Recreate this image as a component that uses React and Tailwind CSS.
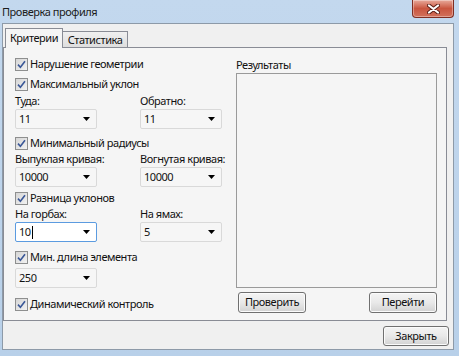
import React from "react";

function Check() {
  return (
    <span className="w-[13px] h-[13px] border border-[#8e8f8f] bg-gradient-to-br from-[#d6d6d6] to-[#f2f2f2] flex items-center justify-center shrink-0">
      <svg width="9" height="9" viewBox="0 0 9 9">
        <path d="M1 4.6 L3.4 7.2 L8 1.2" stroke="#3a5797" strokeWidth="1.6" fill="none" />
      </svg>
    </span>
  );
}

function CheckRow({ label, className = "" }) {
  return (
    <div className={"flex items-center h-[16px] gap-[2px] " + className}>
      <Check />
      <span className="leading-[16px] whitespace-nowrap">{label}</span>
    </div>
  );
}

function Arrow() {
  return (
    <svg width="7" height="4" viewBox="0 0 7 4" className="shrink-0">
      <path d="M0 0 H7 L3.5 4 Z" fill="#000" />
    </svg>
  );
}

function Combo({ value, focused }) {
  return (
    <div
      className={
        focused
          ? "w-[82px] h-[20px] border border-[#5b9be0] bg-white rounded-[2px] flex items-center justify-between pl-[3px] pr-[6px]"
          : "w-[82px] h-[20px] border border-[#d9d9d9] bg-[#f6f6f6] rounded-[2px] flex items-center justify-between pl-[3px] pr-[6px]"
      }
    >
      <span className="flex items-center leading-[14px]">
        {value}
        {focused && <span className="w-[1px] h-[13px] bg-black ml-[1px]" />}
      </span>
      <Arrow />
    </div>
  );
}

function Label({ children }) {
  return <div className="h-[14px] leading-[14px] whitespace-nowrap">{children}</div>;
}

function Pair({ a, b, va, vb, focused, className = "" }) {
  return (
    <div className={"flex " + className}>
      <div className="w-[125px] flex flex-col gap-[1px]">
        <Label>{a}</Label>
        <Combo value={va} focused={focused} />
      </div>
      <div className="flex flex-col gap-[1px]">
        <Label>{b}</Label>
        <Combo value={vb} />
      </div>
    </div>
  );
}

function Button({ children, className = "" }) {
  return (
    <div
      className={
        "border border-[#707070] rounded-[3px] flex items-center justify-center bg-gradient-to-b from-[#f4f4f4] via-[#e9e9e9] to-[#d2d2d2] shadow-[inset_0_0_0_1px_#fbfbfb] " +
        className
      }
    >
      {children}
    </div>
  );
}

export default function App() {
  return (
    <div className="w-[459px] h-[356px] overflow-hidden bg-gradient-to-b from-[#c3d8ee] to-[#b8d0e9] flex flex-col text-[11px] text-[#111] font-['Noto_Sans','Open_Sans',sans-serif] tracking-[-0.45px] relative">
      {/* title bar */}
      <div className="h-[23px] shrink-0 flex items-center pl-[2px] text-[#1b1b1b] text-[11px]">
        <span className="leading-[16px]">Проверка профиля</span>
      </div>
      <div className="absolute left-[412px] top-0 w-[42px] h-[18px] rounded-b-[4px] border border-t-0 border-[#7f2e22] bg-gradient-to-b from-[#e7a99b] via-[#c9553f] to-[#d2715c] flex items-center justify-center shadow-[inset_0_0_0_1px_rgba(255,255,255,0.35)]">
        <svg width="13" height="10" viewBox="0 0 13 10">
          <path d="M2 1.5 L11 8.5 M11 1.5 L2 8.5" stroke="#5a1e16" strokeWidth="4" strokeLinecap="round" />
          <path d="M2 1.5 L11 8.5 M11 1.5 L2 8.5" stroke="#ffffff" strokeWidth="2.2" strokeLinecap="round" />
        </svg>
      </div>

      {/* client area */}
      <div className="ml-[2px] w-[452px] h-[327px] border border-[#8d9aa8] bg-[#f0f0f0] flex flex-col">
        {/* tab strip */}
        <div className="flex items-end pl-[2px] pt-[4px] h-[23px] shrink-0">
          <div className="w-[58px] h-[20px] border border-b-0 border-[#898c95] bg-[#f5f5f5] flex items-start justify-center pt-[2px] relative z-10 -mb-[1px]">
            <span className="leading-[14px]">Критерии</span>
          </div>
          <div className="w-[65px] h-[16px] border border-l-0 border-b-0 border-[#898c95] bg-gradient-to-b from-[#f0f0f0] to-[#dedede] flex items-center justify-center">
            <span className="leading-[14px]">Статистика</span>
          </div>
        </div>
        {/* tab panel */}
        <div className="w-[444px] h-[274px] border border-[#898c95] bg-[#f5f5f5] flex pl-[11px]">
          {/* left column */}
          <div className="w-[221px] flex flex-col pt-[8px]">
            <CheckRow label="Нарушение геометрии" />
            <CheckRow label="Максимальный уклон" className="mt-[4px]" />
            <Pair a="Туда:" b="Обратно:" va="11" vb="11" className="mt-[2px]" />
            <CheckRow label="Минимальный радиусы" className="mt-[6px]" />
            <Pair a="Выпуклая кривая:" b="Вогнутая кривая:" va="10000" vb="10000" className="mt-[1px]" />
            <CheckRow label="Разница уклонов" className="mt-[3px]" />
            <Pair a="На горбах:" b="На ямах:" va="10" vb="5" focused className="mt-[1px]" />
            <CheckRow label="Мин. длина элемента" className="mt-[7px]" />
            <div className="mt-[3px]">
              <Combo value="250" />
            </div>
            <CheckRow label="Динамический контроль" className="mt-[8px]" />
          </div>
          {/* right column */}
          <div className="w-[201px] flex flex-col pt-[10px]">
            <div className="h-[14px] leading-[14px]">Результаты</div>
            <div className="mt-[1px] h-[215px] border border-[#9a9a9a] bg-[#f5f5f5]" />
            <div className="flex justify-between mt-[4px] pl-[2px]">
              <Button className="w-[68px] h-[21px]">Проверить</Button>
              <Button className="w-[68px] h-[21px]">Перейти</Button>
            </div>
          </div>
        </div>
        <div className="flex justify-end pr-[4px] mt-[5px]">
          <Button className="w-[66px] h-[20px]">Закрыть</Button>
        </div>
      </div>
    </div>
  );
}
